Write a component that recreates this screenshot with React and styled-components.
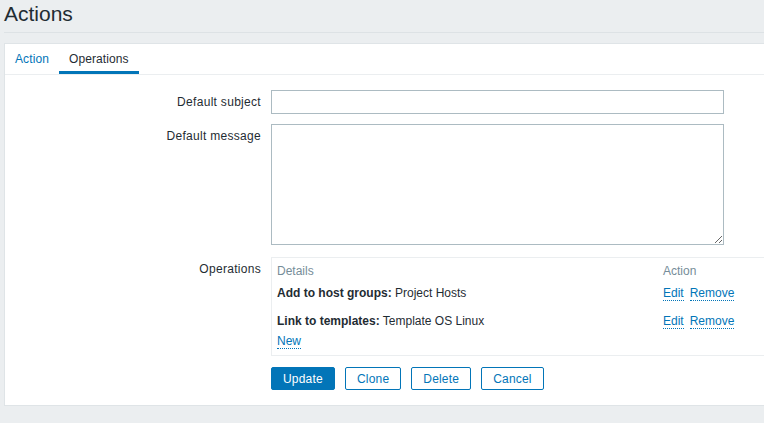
import React from 'react';
import styled, { createGlobalStyle } from 'styled-components';

const GlobalStyle = createGlobalStyle`
  html, body {
    margin: 0;
    padding: 0;
    background: #ebeef0;
    overflow: hidden;
  }
  body {
    font-family: Arial, "Liberation Sans", sans-serif;
    font-size: 12px;
    color: #1f2c33;
  }
`;

const Header = styled.div`
  margin: 0 0 0 4px;
  height: 32px;
  border-bottom: 1px solid #dde2e5;
  display: flex;
  align-items: flex-start;
`;

const Title = styled.h1`
  margin: 0;
  padding-top: 2px;
  font-size: 21px;
  font-weight: normal;
  line-height: 24px;
  color: #1f2c33;
`;

const Panel = styled.div`
  margin: 10px 0 0 4px;
  width: 820px;
  background: #fff;
  border: 1px solid #dfe4e7;
  padding-bottom: 15px;
`;

const TabBar = styled.div`
  display: flex;
  height: 30px;
  border-bottom: 1px solid #ebeef0;
`;

const Tab = styled.div`
  padding: 3px 10px 0;
  display: flex;
  align-items: center;
  letter-spacing: 0.1px;
  color: ${p => (p.$active ? '#1f2c33' : '#0275b8')};
  border-bottom: 3px solid ${p => (p.$active ? '#0275b8' : 'transparent')};
`;

const Form = styled.div`
  padding-top: 15px;
  display: flex;
  flex-direction: column;
`;

const Row = styled.div`
  display: flex;
  align-items: flex-start;
  margin-bottom: ${p => p.$gap || 10}px;
`;

const Label = styled.div`
  width: 256px;
  text-align: right;
  padding-top: 5px;
  margin-right: 10px;
  line-height: 14px;
  letter-spacing: 0.3px;
`;

const Input = styled.input`
  box-sizing: border-box;
  width: 453px;
  height: 24px;
  margin: 0;
  border: 1px solid #acbbc2;
  background: #fff;
  outline: none;
`;

const TextArea = styled.textarea`
  box-sizing: border-box;
  width: 453px;
  height: 121px;
  margin: 0;
  border: 1px solid #acbbc2;
  background: #fff;
  outline: none;
  resize: both;
`;

const OpsBox = styled.div`
  box-sizing: border-box;
  width: 540px;
  border: 1px solid #ebeef0;
  border-right: none;
  padding: 6px 5px 7px 5px;
`;

const OpsTable = styled.div`
  display: grid;
  grid-template-columns: 386px auto;
`;

const HeadCell = styled.div`
  color: #768d99;
  height: 22px;
  line-height: 14px;
`;

const Cell = styled.div`
  height: ${p => (p.$last ? 20 : 28)}px;
  line-height: 14px;
`;

const Bold = styled.b`
  font-weight: bold;
`;

const Link = styled.span`
  color: #0275b8;
  border-bottom: 1px dotted #0275b8;
  margin-right: 6px;
  cursor: pointer;
`;

const Buttons = styled.div`
  display: flex;
  gap: 10px;
  margin-left: 266px;
`;

const Button = styled.button`
  box-sizing: border-box;
  height: 23px;
  padding: 0 11px;
  font-family: Arial, "Liberation Sans", sans-serif;
  font-size: 12px;
  letter-spacing: 0.2px;
  border-radius: 2px;
  border: 1px solid #0275b8;
  background: ${p => (p.$primary ? '#0275b8' : '#fff')};
  color: ${p => (p.$primary ? '#fff' : '#0275b8')};
`;

const operations = [
  { label: 'Add to host groups:', value: 'Project Hosts' },
  { label: 'Link to templates:', value: 'Template OS Linux' },
];

export default function App() {
  return (
    <>
      <GlobalStyle />
      <Header>
        <Title>Actions</Title>
      </Header>
      <Panel>
        <TabBar>
          <Tab>Action</Tab>
          <Tab $active>Operations</Tab>
        </TabBar>
        <Form>
          <Row>
            <Label>Default subject</Label>
            <Input />
          </Row>
          <Row $gap={12}>
            <Label>Default message</Label>
            <TextArea />
          </Row>
          <Row $gap={11}>
            <Label>Operations</Label>
            <OpsBox>
              <OpsTable>
                <HeadCell>Details</HeadCell>
                <HeadCell>Action</HeadCell>
                {operations.map((op, i) => {
                  const last = i === operations.length - 1;
                  return (
                    <React.Fragment key={op.label}>
                      <Cell $last={last}>
                        <Bold>{op.label}</Bold> {op.value}
                      </Cell>
                      <Cell $last={last}>
                        <Link>Edit</Link>
                        <Link>Remove</Link>
                      </Cell>
                    </React.Fragment>
                  );
                })}
              </OpsTable>
              <Link>New</Link>
            </OpsBox>
          </Row>
          <Buttons>
            <Button $primary>Update</Button>
            <Button>Clone</Button>
            <Button>Delete</Button>
            <Button>Cancel</Button>
          </Buttons>
        </Form>
      </Panel>
    </>
  );
}
